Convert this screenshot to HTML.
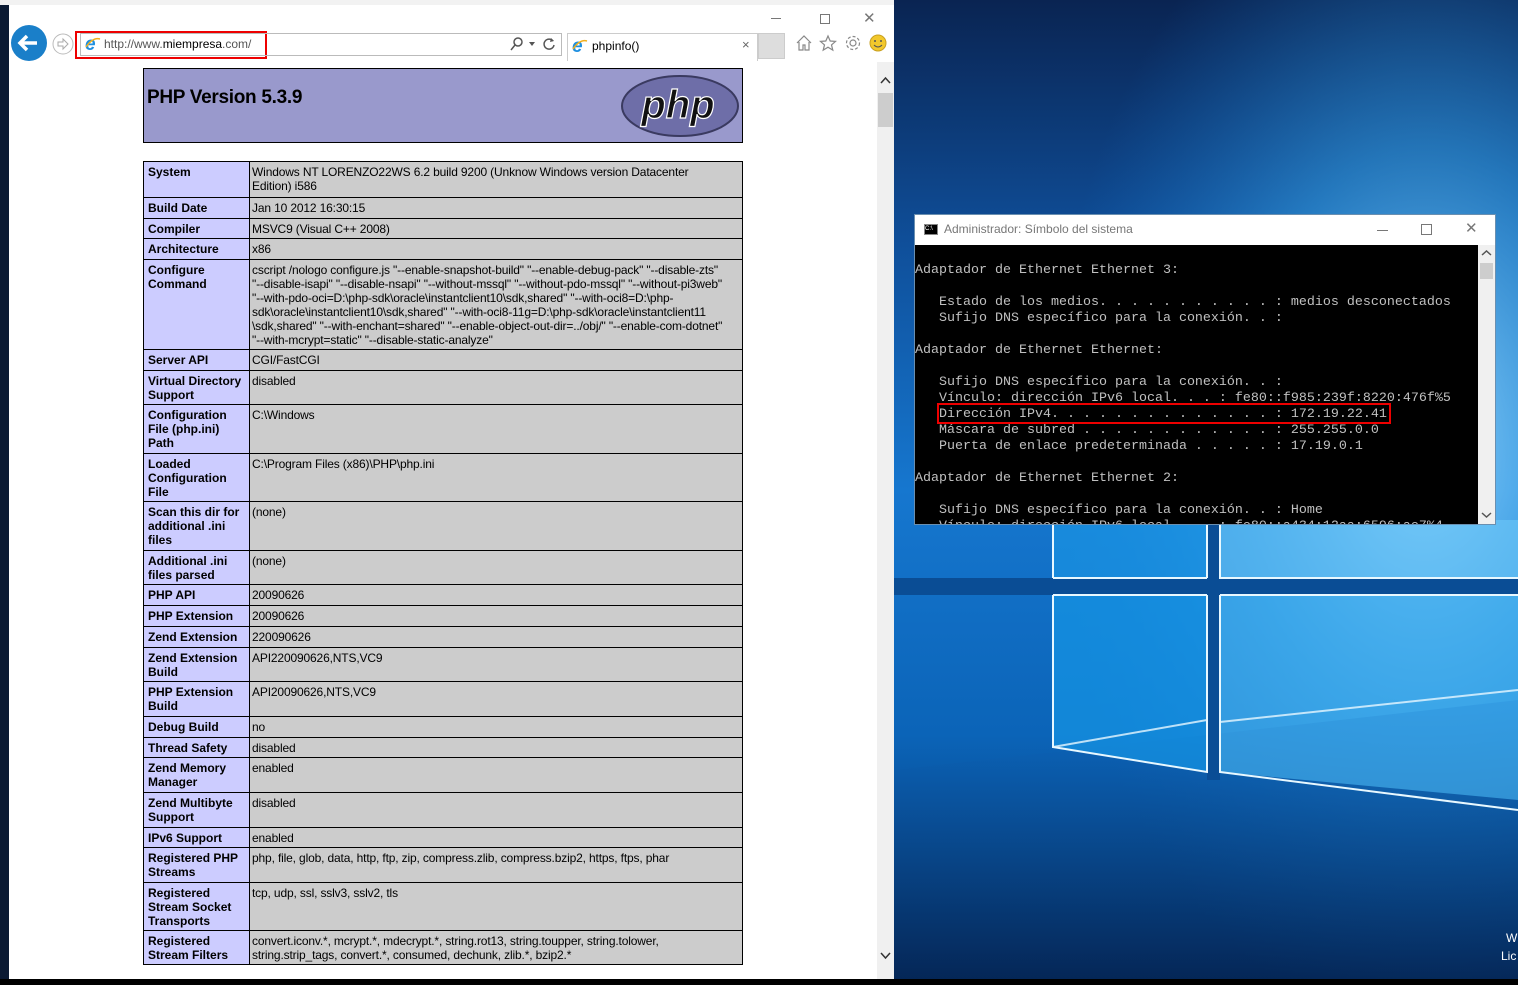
<!DOCTYPE html>
<html><head><meta charset="utf-8"><style>
*{margin:0;padding:0;box-sizing:border-box}
body{width:1518px;height:985px;overflow:hidden;position:relative;background:#000;font-family:"Liberation Sans",Arial,sans-serif}
.abs{position:absolute}
#desk{left:894px;top:0;width:624px;height:979px}
#browser{left:9px;top:5px;width:885px;height:974px;background:#fff}
#lstrip{left:0;top:5px;width:9px;height:974px;background:#0b1a33}
#top{left:0;top:0;width:1518px;height:5px;background:#f2f2f2}
.cell{position:absolute;font-size:12px;line-height:14px;padding:3px 0 0 4px;color:#000;white-space:nowrap}
.l{background:#ccccff;font-weight:bold;left:1px;width:105px}
.v{background:#cccccc;left:107px;width:492px;letter-spacing:-0.15px;padding-left:2px}
#cmd{left:914px;top:214px;width:582px;height:311px;background:#000;border:1px solid #6a8fb0;overflow:hidden}
#cmdtxt{position:absolute;left:0;top:48px;font-family:"Liberation Mono",monospace;font-size:13.33px;line-height:16px;color:#c0c0c0;white-space:pre}
</style></head><body>
<div class="abs" id="top"></div>
<svg class="abs" id="desk" width="624" height="979" viewBox="0 0 624 979">
 <defs>
  <linearGradient id="bg" x1="0" y1="0" x2="0" y2="1">
   <stop offset="0" stop-color="#0a2452"/><stop offset="0.25" stop-color="#0f4f9a"/>
   <stop offset="0.5" stop-color="#1677cf"/><stop offset="0.75" stop-color="#0b64b8"/>
   <stop offset="1" stop-color="#062d63"/>
  </linearGradient>
  <radialGradient id="gl" cx="0.85" cy="0.45" r="0.6">
   <stop offset="0" stop-color="#9fdcff" stop-opacity="0.9"/><stop offset="0.5" stop-color="#3aaaf0" stop-opacity="0.5"/><stop offset="1" stop-color="#1677cf" stop-opacity="0"/>
  </radialGradient>
  <linearGradient id="fl" x1="0" y1="0" x2="0" y2="1">
   <stop offset="0" stop-color="#0d6cc6"/><stop offset="1" stop-color="#042452"/>
  </linearGradient>
 </defs>
 <rect width="624" height="979" fill="url(#bg)"/>
 <rect width="624" height="979" fill="url(#gl)"/>
 <polygon points="0,770 624,700 624,979 0,979" fill="url(#fl)" opacity="0.7"/>
 <polygon points="159,520 313,520 313,578 159,578" fill="#1a9ae8" opacity="0.6"/>
 <polygon points="326,520 624,520 624,578 326,578" fill="#6cc8f8" opacity="0.6"/>
 <polygon points="159,595 313,595 313,772 159,747" fill="#1595e6" opacity="0.7"/>
 <polygon points="326,595 624,595 624,800 326,772" fill="#4ab8f4" opacity="0.6"/>
 <rect x="0" y="578" width="624" height="17" fill="#0a4d95"/>
 <rect x="313" y="520" width="13" height="260" fill="#0a4d95"/>
 <g stroke="#e8f8ff" stroke-width="2" fill="none">
  <path d="M159 520V578M159 595V747L313 772V595"/>
  <path d="M313 520V578M159 578H313M159 595H313"/>
  <path d="M326 520V578H624M326 595H624M326 595V772L624 810"/>
  <path d="M159 747L313 720M326 722L624 690" opacity="0.8"/>
 </g>
 <text x="612" y="942" fill="#fff" font-size="12" font-family="Liberation Sans">W</text>
 <text x="607" y="960" fill="#fff" font-size="12" font-family="Liberation Sans">Lic</text>
</svg>
<div class="abs" id="lstrip"></div>
<div class="abs" id="browser">
 <div class="abs" style="left:762px;top:13px;width:10px;height:1px;background:#777"></div>
 <div class="abs" style="left:811px;top:9px;width:10px;height:10px;border:1px solid #777"></div>
 <div class="abs" style="left:854px;top:4px;font-size:15px;color:#777">✕</div>
 <svg class="abs" style="left:1px;top:20px" width="38" height="38"><circle cx="19" cy="18" r="18" fill="#1a7fc9"/><path d="M10 18h17M17 11l-7 7 7 7" stroke="#fff" stroke-width="3.5" fill="none"/></svg>
 <svg class="abs" style="left:43px;top:28px" width="22" height="22"><circle cx="11" cy="11" r="10" fill="#fff" stroke="#bbb"/><path d="M6 9h5V6l5 5-5 5v-3H6z" fill="none" stroke="#aaa"/></svg>
 <div class="abs" style="left:66px;top:26px;width:192px;height:28px;border:2px solid #e00"></div>
 <div class="abs" style="left:71px;top:28px;width:482px;height:23px;border:1px solid #bbb"></div>
 <svg class="abs" style="left:75px;top:30px" width="18" height="18"><text x="1" y="15" font-family="Liberation Sans" font-style="italic" font-weight="bold" font-size="19" fill="#1e8fe0">e</text><path d="M2 12 Q9 2 16 4" stroke="#f2b01e" stroke-width="1.5" fill="none"/></svg>
 <div class="abs" style="left:95px;top:32px;font-size:12px;color:#555">http://www.<span style="color:#000">miempresa</span>.com/</div>
 <svg class="abs" style="left:500px;top:31px" width="50" height="16"><circle cx="9" cy="6" r="4" fill="none" stroke="#555" stroke-width="1.5"/><path d="M6 9l-4 5" stroke="#555" stroke-width="1.5"/><path d="M20 6l3 4 3-4z" fill="#555"/><path d="M44 5a5 5 0 1 0 1 4" stroke="#555" stroke-width="1.5" fill="none"/><path d="M42 2l3 3-4 1z" fill="#555"/></svg>
 <div class="abs" style="left:558px;top:28px;width:191px;height:28px;border:1px solid #ccc;border-bottom:none"></div>
 <svg class="abs" style="left:562px;top:32px" width="18" height="18"><text x="1" y="15" font-family="Liberation Sans" font-style="italic" font-weight="bold" font-size="19" fill="#1e8fe0">e</text><path d="M2 12 Q9 2 16 4" stroke="#f2b01e" stroke-width="1.5" fill="none"/></svg>
 <div class="abs" style="left:583px;top:34px;font-size:12px">phpinfo()</div>
 <div class="abs" style="left:733px;top:32px;font-size:13px;color:#666">×</div>
 <div class="abs" style="left:749px;top:28px;width:27px;height:26px;background:#ddd;border:1px solid #ccc"></div>
 <svg class="abs" style="left:786px;top:29px" width="70" height="20" fill="none" stroke="#888" stroke-width="1.2"><path d="M2 9L9 2l7 7M4 8v8h4v-5h2v5h4V8"/><path d="M33 2l2.2 5 5.3.4-4 3.5 1.3 5.2-4.8-2.9-4.8 2.9 1.3-5.2-4-3.5 5.3-.4z"/><circle cx="58" cy="9" r="3"/><circle cx="58" cy="9" r="6.5" stroke-dasharray="3 2"/></svg>
 <svg class="abs" style="left:860px;top:29px" width="18" height="18"><circle cx="9" cy="9" r="8" fill="#f2c82c" stroke="#c9a020"/><circle cx="6" cy="7" r="1" fill="#555"/><circle cx="12" cy="7" r="1" fill="#555"/><path d="M5 11q4 4 8 0" stroke="#555" fill="none"/></svg>
 <div class="abs" style="left:868px;top:57px;width:17px;height:917px;background:#f0f0f0"></div>
 <div class="abs" style="left:869px;top:88px;width:15px;height:34px;background:#cdcdcd"></div>
 <svg class="abs" style="left:870px;top:70px" width="13" height="10"><path d="M2 8l4.5-5 4.5 5" stroke="#333" stroke-width="1.5" fill="none"/></svg>
 <svg class="abs" style="left:870px;top:946px" width="13" height="10"><path d="M2 2l4.5 5 4.5-5" stroke="#333" stroke-width="1.5" fill="none"/></svg>
</div>
<div class="abs" style="left:143px;top:68px;width:600px;height:75px;background:#9999cc;border:1px solid #000">
 <div class="abs" style="left:3px;top:18px;font-size:19px;font-weight:bold;letter-spacing:-0.3px">PHP Version 5.3.9</div>
 <svg class="abs" style="left:476px;top:5px" width="120" height="64"><ellipse cx="60" cy="32" rx="58" ry="30" fill="#6e6ea8" stroke="#3a3a60" stroke-width="2"/><text x="58" y="44" text-anchor="middle" font-family="Liberation Sans" font-style="italic" font-weight="bold" font-size="40" fill="#111" stroke="#fff" stroke-width="1.2">php</text></svg>
</div>
<div class="abs" style="left:143px;top:161px;width:600px;height:804px;background:#000">
<div class="cell l" style="top:1px;height:35px">System</div><div class="cell v" style="top:1px;height:35px">Windows NT LORENZO22WS 6.2 build 9200 (Unknow Windows version Datacenter<br>Edition) i586</div>
<div class="cell l" style="top:37px;height:20px">Build Date</div><div class="cell v" style="top:37px;height:20px">Jan 10 2012 16:30:15</div>
<div class="cell l" style="top:58px;height:19px">Compiler</div><div class="cell v" style="top:58px;height:19px">MSVC9 (Visual C++ 2008)</div>
<div class="cell l" style="top:78px;height:20px">Architecture</div><div class="cell v" style="top:78px;height:20px">x86</div>
<div class="cell l" style="top:99px;height:89px">Configure<br>Command</div><div class="cell v" style="top:99px;height:89px">cscript /nologo configure.js "--enable-snapshot-build" "--enable-debug-pack" "--disable-zts"<br>"--disable-isapi" "--disable-nsapi" "--without-mssql" "--without-pdo-mssql" "--without-pi3web"<br>"--with-pdo-oci=D:\php-sdk\oracle\instantclient10\sdk,shared" "--with-oci8=D:\php-<br>sdk\oracle\instantclient10\sdk,shared" "--with-oci8-11g=D:\php-sdk\oracle\instantclient11<br>\sdk,shared" "--with-enchant=shared" "--enable-object-out-dir=../obj/" "--enable-com-dotnet"<br>"--with-mcrypt=static" "--disable-static-analyze"</div>
<div class="cell l" style="top:189px;height:20px">Server API</div><div class="cell v" style="top:189px;height:20px">CGI/FastCGI</div>
<div class="cell l" style="top:210px;height:33px">Virtual Directory<br>Support</div><div class="cell v" style="top:210px;height:33px">disabled</div>
<div class="cell l" style="top:244px;height:48px">Configuration<br>File (php.ini)<br>Path</div><div class="cell v" style="top:244px;height:48px">C:\Windows</div>
<div class="cell l" style="top:293px;height:47px">Loaded<br>Configuration<br>File</div><div class="cell v" style="top:293px;height:47px">C:\Program Files (x86)\PHP\php.ini</div>
<div class="cell l" style="top:341px;height:48px">Scan this dir for<br>additional .ini<br>files</div><div class="cell v" style="top:341px;height:48px">(none)</div>
<div class="cell l" style="top:390px;height:33px">Additional .ini<br>files parsed</div><div class="cell v" style="top:390px;height:33px">(none)</div>
<div class="cell l" style="top:424px;height:20px">PHP API</div><div class="cell v" style="top:424px;height:20px">20090626</div>
<div class="cell l" style="top:445px;height:20px">PHP Extension</div><div class="cell v" style="top:445px;height:20px">20090626</div>
<div class="cell l" style="top:466px;height:20px">Zend Extension</div><div class="cell v" style="top:466px;height:20px">220090626</div>
<div class="cell l" style="top:487px;height:33px">Zend Extension<br>Build</div><div class="cell v" style="top:487px;height:33px">API220090626,NTS,VC9</div>
<div class="cell l" style="top:521px;height:34px">PHP Extension<br>Build</div><div class="cell v" style="top:521px;height:34px">API20090626,NTS,VC9</div>
<div class="cell l" style="top:556px;height:20px">Debug Build</div><div class="cell v" style="top:556px;height:20px">no</div>
<div class="cell l" style="top:577px;height:19px">Thread Safety</div><div class="cell v" style="top:577px;height:19px">disabled</div>
<div class="cell l" style="top:597px;height:34px">Zend Memory<br>Manager</div><div class="cell v" style="top:597px;height:34px">enabled</div>
<div class="cell l" style="top:632px;height:34px">Zend Multibyte<br>Support</div><div class="cell v" style="top:632px;height:34px">disabled</div>
<div class="cell l" style="top:667px;height:19px">IPv6 Support</div><div class="cell v" style="top:667px;height:19px">enabled</div>
<div class="cell l" style="top:687px;height:34px">Registered PHP<br>Streams</div><div class="cell v" style="top:687px;height:34px">php, file, glob, data, http, ftp, zip, compress.zlib, compress.bzip2, https, ftps, phar</div>
<div class="cell l" style="top:722px;height:47px">Registered<br>Stream Socket<br>Transports</div><div class="cell v" style="top:722px;height:47px">tcp, udp, ssl, sslv3, sslv2, tls</div>
<div class="cell l" style="top:770px;height:33px">Registered<br>Stream Filters</div><div class="cell v" style="top:770px;height:33px">convert.iconv.*, mcrypt.*, mdecrypt.*, string.rot13, string.toupper, string.tolower,<br>string.strip_tags, convert.*, consumed, dechunk, zlib.*, bzip2.*</div>
</div>
<div class="abs" id="cmd">
 <div class="abs" style="left:0;top:0;width:580px;height:30px;background:#fff"></div>
 <div class="abs" style="left:9px;top:9px;width:14px;height:11px;background:#000;border:1px solid #888;color:#fff;font-size:6px;line-height:9px">C:\</div>
 <div class="abs" style="left:29px;top:7px;font-size:12px;color:#777">Administrador: Símbolo del sistema</div>
 <div class="abs" style="left:462px;top:15px;width:11px;height:1px;background:#777"></div>
 <div class="abs" style="left:506px;top:9px;width:11px;height:11px;border:1px solid #777"></div>
 <div class="abs" style="left:550px;top:4px;font-size:15px;color:#777">✕</div>
 <div id="cmdtxt">Adaptador de Ethernet Ethernet 3:

   Estado de los medios. . . . . . . . . . . : medios desconectados
   Sufijo DNS específico para la conexión. . :

Adaptador de Ethernet Ethernet:

   Sufijo DNS específico para la conexión. . :
   Vínculo: dirección IPv6 local. . . : fe80::f985:239f:8220:476f%5
   Dirección IPv4. . . . . . . . . . . . . . : 172.19.22.41
   Máscara de subred . . . . . . . . . . . . : 255.255.0.0
   Puerta de enlace predeterminada . . . . . : 17.19.0.1

Adaptador de Ethernet Ethernet 2:

   Sufijo DNS específico para la conexión. . : Home
   Vínculo: dirección IPv6 local. . . : fe80::a434:12aa:6596:ae7%4</div>
 <div class="abs" style="left:563px;top:30px;width:17px;height:279px;background:#f0f0f0"></div>
 <div class="abs" style="left:565px;top:48px;width:13px;height:16px;background:#cdcdcd"></div>
 <svg class="abs" style="left:566px;top:34px" width="11" height="8"><path d="M1 6l4.5-4 4.5 4" stroke="#555" stroke-width="1.5" fill="none"/></svg>
 <svg class="abs" style="left:566px;top:296px" width="11" height="8"><path d="M1 2l4.5 4 4.5-4" stroke="#555" stroke-width="1.5" fill="none"/></svg>
 <div class="abs" style="left:22px;top:188px;width:454px;height:21px;border:2px solid #e00"></div>
</div>
</body></html>
